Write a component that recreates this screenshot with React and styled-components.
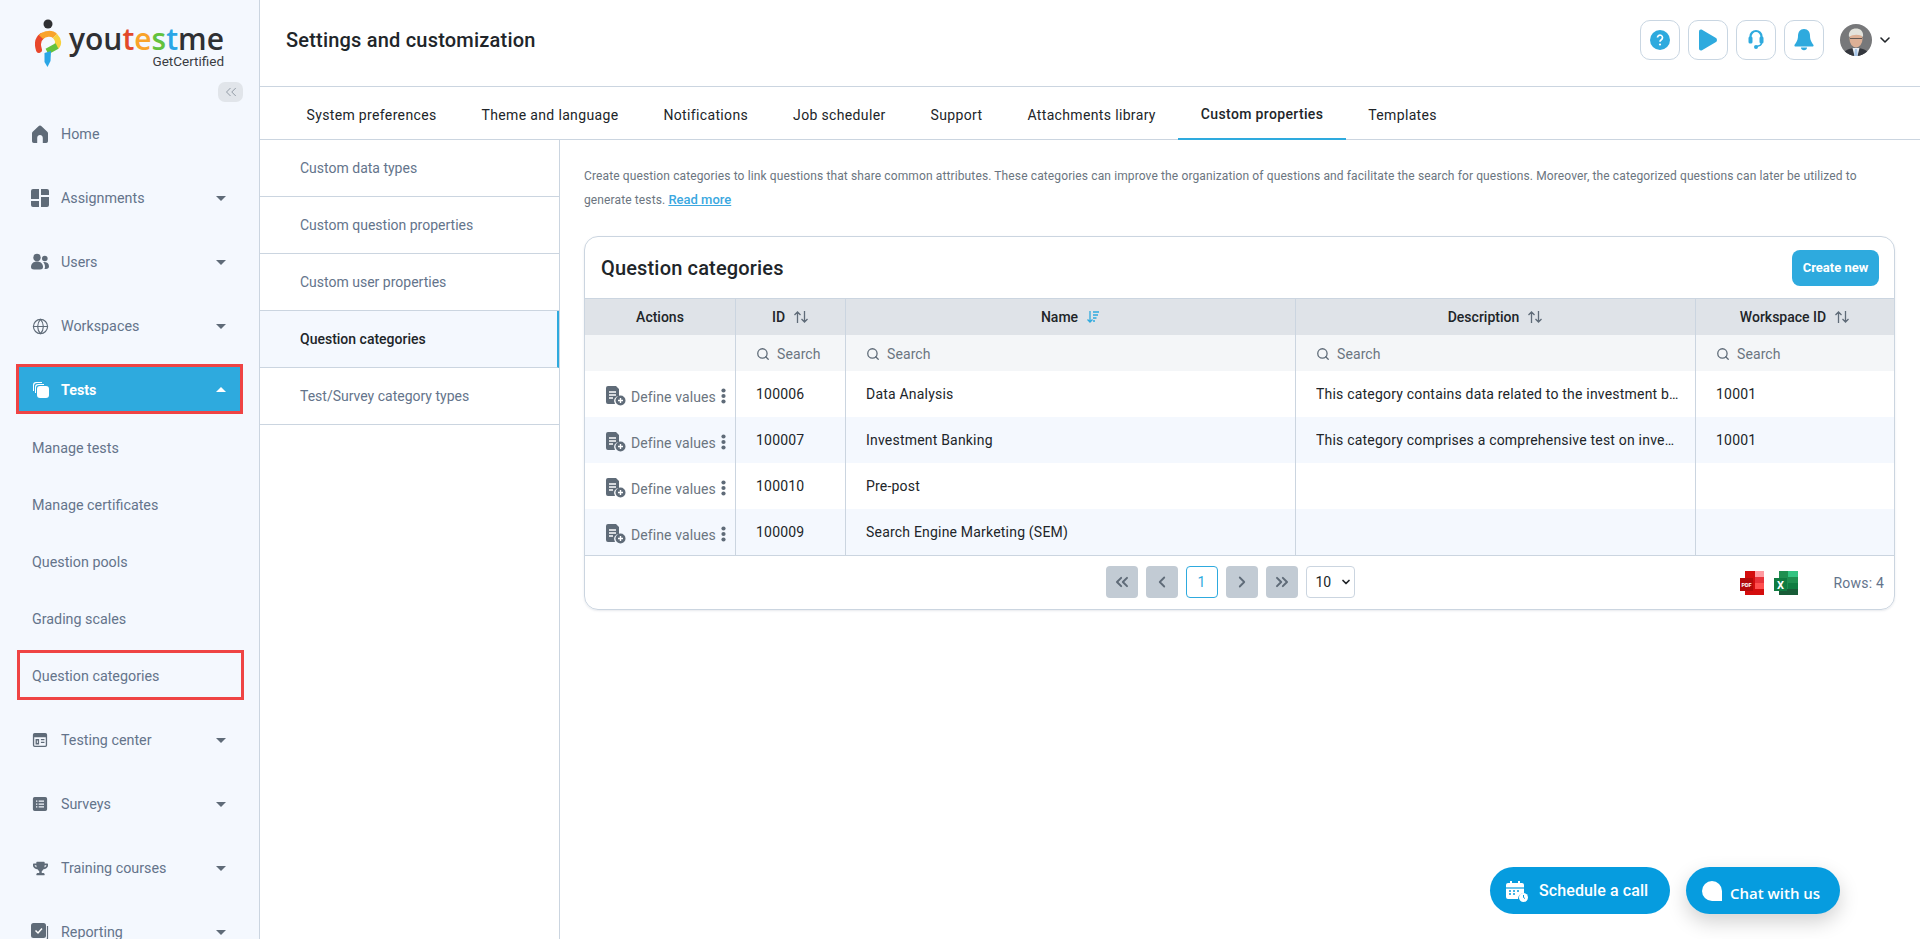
import React from "react";
import styled, { createGlobalStyle } from "styled-components";
import { Globe, ChevronsLeft, ChevronsRight, ChevronLeft, ChevronRight, ChevronDown, Search as SearchIcon } from "lucide-react";
import { FaTrophy } from "react-icons/fa";

const Global = createGlobalStyle`
  html, body { margin: 0; padding: 0; height: 100%; overflow: hidden; background: #fff; }
  body { font-family: Roboto, "Liberation Sans", sans-serif; color: #212529; }
  * { box-sizing: border-box; }
`;

const Page = styled.div`display: flex; width: 1920px; height: 939px; overflow: hidden; position: relative;`;

const Sidebar = styled.aside`
  width: 260px; flex: none; background: #f4f8fe; border-right: 1px solid #cbd5e0;
  display: flex; flex-direction: column; overflow: hidden; height: 939px;
`;
const LogoArea = styled.div`height: 80px; padding: 19px 0 0 35px; display: flex; gap: 6px; flex: none;`;
const LogoText = styled.div`display: flex; flex-direction: column; align-items: flex-end; line-height: 1; margin-top: 3px;`;
const Brand = styled.div`font-family: "Open Sans", sans-serif; font-weight: 600; font-size: 30px; line-height: 34px; color: #2f3033;`;
const BrandPart = styled.span`color: ${p => p.$c};`;
const Tagline = styled.div`font-size: 13.5px; color: #3a3d42; margin-top: -1px;`;
const CollapseRow = styled.div`display: flex; justify-content: flex-end; padding-right: 16px; flex: none; height: 20px; margin-top: 2px;`;
const Collapse = styled.div`width: 25px; height: 20px; background: #e1e5ea; border-radius: 7px; display: flex; align-items: center; justify-content: center; color: #77818d;`;

const NavItem = styled.div`
  height: 64px; flex: none; display: flex; align-items: center;
  color: #64748b; font-size: 14.3px; padding: 0 33px 0 31px;
`;
const SubItem = styled.div`
  height: 57px; flex: none; display: flex; align-items: center;
  color: #64748b; font-size: 14.3px; padding-left: 32px;
`;
const ActiveNav = styled.div`
  height: 50px; flex: none; display: flex; align-items: center; margin: 6px 16px 5px; padding: 1px 14px 0 13px;
  background: #2eaade; border: 3px solid #ef4444;
  color: #fff; font-weight: 700; font-size: 14.3px;
`;
const BoxedNav = styled.div`
  height: 50px; margin: 3px 15px 8px 17px; flex: none; display: flex; align-items: center; padding: 1px 12px 0;
  border: 3px solid #ef4444; color: #64748b; font-size: 14.3px;
`;
const NavIcon = styled.span`width: 18px; height: 18px; display: inline-flex; align-items: center; justify-content: center; margin-right: 12px; color: #5f6b78; flex: none;`;
const ActiveIcon = styled(NavIcon)`color: #fff; margin-right: 11px;`;
const NavLabel = styled.span`flex: 1;`;
const Caret = styled.span`
  width: 0; height: 0; border-left: 5px solid transparent; border-right: 5px solid transparent;
  ${p => p.$up ? "border-bottom: 5px solid #fff;" : "border-top: 5px solid #5f6b78;"}
`;

const Main = styled.div`flex: 1; min-width: 0; display: flex; flex-direction: column;`;
const Header = styled.header`height: 87px; flex: none; display: flex; align-items: center; padding: 0 27px 7px 26px; border-bottom: 1px solid #cbd5e0;`;
const Title = styled.h1`margin: 0; font-size: 20px; font-weight: 500; color: #212529; flex: 1; letter-spacing: .2px;`;
const HeaderBtn = styled.div`width: 40px; height: 40px; border: 1px solid #c9d6e2; border-radius: 10px; margin-left: 8px; display: flex; align-items: center; justify-content: center;`;
const UserWrap = styled.div`display: flex; align-items: center; margin-left: 16px; gap: 5px;`;
const Avatar = styled.svg`width: 32px; height: 32px; border-radius: 50%; display: block;`;

const Tabs = styled.nav`height: 53px; flex: none; display: flex; padding-left: 24px; border-bottom: 1px solid #cbd5e0;`;
const Tab = styled.div`
  padding: 3px 22.5px 0; display: flex; align-items: center; font-size: 14px; color: #212529;
  font-weight: ${p => p.$active ? 500 : 400}; height: 53px; letter-spacing: .35px;
  border-bottom: ${p => p.$active ? "2px solid #2eaade" : "none"};
`;
const Body = styled.div`flex: 1; display: flex; min-height: 0;`;
const SideMenu = styled.div`width: 300px; flex: none; border-right: 1px solid #cbd5e0;`;
const SideRow = styled.div`
  height: 57px; padding-left: 40px; display: flex; align-items: center; font-size: 14px;
  border-bottom: 1px solid #cbd5e0; color: ${p => p.$active ? "#212529" : "#64748b"};
  font-weight: ${p => p.$active ? 500 : 400}; background: ${p => p.$active ? "#f4f8fe" : "#fff"};
  border-right: ${p => p.$active ? "2px solid #2eaade" : "none"};
`;
const Content = styled.div`flex: 1; padding: 24px 25px 0 24px; min-width: 0;`;
const Desc = styled.p`margin: 0 0 24px; font-size: 12px; line-height: 24px; color: #6b7580; letter-spacing: .12px;`;
const ReadMore = styled.a`color: #3ba8e0; font-weight: 500; font-size: 13px; letter-spacing: 0; text-decoration: underline;`;
const Card = styled.section`border: 1px solid #cbd5e0; border-radius: 14px; overflow: hidden; box-shadow: 0 1px 2px rgba(100,116,139,.15);`;
const CardHead = styled.div`height: 62px; display: flex; align-items: center; justify-content: space-between; padding: 0 15px 0 16px; border-bottom: 1px solid #cbd5e0;`;
const CardTitle = styled.h2`margin: 0; font-size: 20px; font-weight: 500; color: #212529; letter-spacing: .16px;`;
const CreateBtn = styled.button`width: 87px; height: 36px; border: 0; border-radius: 8px; background: #2eaade; color: #fff; font: 700 13px Roboto, sans-serif;`;

const Grid = styled.div`display: grid; grid-template-columns: 151px 110px 450px 400px 1fr;`;
const Th = styled.div`height: 36px; background: #dfe3e8; display: flex; align-items: center; justify-content: center; gap: 8px; font-size: 14px; font-weight: 500; color: #212529; border-right: ${p => p.$last ? 0 : "1px solid #cbd5e0"};`;
const SearchCell = styled.div`height: 36px; background: #f4f6f8; display: flex; align-items: center; padding: 2px 0 0 20px; gap: 7px; color: #6b7580; font-size: 14px; letter-spacing: .1px; border-right: ${p => p.$last ? 0 : "1px solid #cbd5e0"};`;
const Td = styled.div`
  height: 46px; background: ${p => p.$alt ? "#f4f8fe" : "#fff"}; display: flex; align-items: center; padding: 0 16px 0 20px; font-size: 14px; letter-spacing: .2px;
  color: #212529; border-right: ${p => p.$last ? 0 : "1px solid #cbd5e0"}; min-width: 0;
`;
const Ellipsis = styled.span`overflow: hidden; text-overflow: ellipsis; white-space: nowrap;`;
const ActionCell = styled(Td)`padding: 3px 0 0 21px; gap: 5px; color: #6b7580; letter-spacing: .1px;`;
const ActionLabel = styled.span`font-size: 14px; margin-top: 2px;`;
const Footer = styled.div`height: 54px; border-top: 1px solid #cbd5e0; display: flex; align-items: center; position: relative; justify-content: center; padding: 0 19px 1px 0; gap: 8px;`;
const PageBtn = styled.div`width: 32px; height: 32px; border-radius: 4px; background: #c2cbd4; color: #5f6b78; display: flex; align-items: center; justify-content: center;`;
const PageNum = styled.div`width: 32px; height: 32px; border-radius: 4px; border: 1px solid #2eaade; color: #2eaade; font-size: 14px; display: flex; align-items: center; justify-content: center;`;
const PageSize = styled.div`width: 49px; height: 32px; border-radius: 4px; border: 1px solid #cbd5e0; font-size: 14px; color: #212529; display: flex; align-items: center; padding-left: 9px; gap: 9px;`;
const FooterRight = styled.div`position: absolute; right: 10px; top: 0; bottom: 0; display: flex; align-items: center; gap: 10px;`;
const Rows = styled.span`font-size: 14px; color: #64748b; margin-left: 26px; letter-spacing: .2px;`;

const Float = styled.div`position: absolute; bottom: 25px; height: 47px; border-radius: 24px; background: #069cdf; color: #fff; display: flex; align-items: center;`;
const CallBtn = styled(Float)`left: 1490px; width: 180px; padding-left: 16px; gap: 11px; font-weight: 500; font-size: 16px; letter-spacing: .1px;`;
const ChatBtn = styled(Float)`left: 1686px; width: 154px; padding: 0 0 0 16px; gap: 8px; box-shadow: 0 8px 20px rgba(0,0,0,.18); font-family: "Open Sans", sans-serif; font-weight: 600; font-size: 15px;`;
const ChatDot = styled.span`width: 20px; height: 20px; border-radius: 50% 50% 0 50%; background: #fff; display: block;`;
const ChatLabel = styled.span`padding-top: 4px;`;

const Mono = ({ children, size = 18 }) => <svg width={size} height={size} viewBox="0 0 18 18" fill="currentColor">{children}</svg>;

const Logo = () => (
  <svg width="28" height="50" viewBox="0 0 28 50">
    <circle cx="13" cy="5" r="4.500" fill="#2f3033" />
    <path d="M4 31 C2 25 3 20 7 17" fill="none" stroke="#e8472b" strokeWidth="6" strokeLinecap="round" />
    <path d="M6 18 C10 14 17 14 20 17" fill="none" stroke="#f9a32a" strokeWidth="6" />
    <path d="M20 17 C24 21 24 25 21 28" fill="none" stroke="#f7d13d" strokeWidth="6" />
    <path d="M22 27 L12 32.500" fill="none" stroke="#63c23e" strokeWidth="6" />
    <path d="M9.500 34 L16 32 L15.500 42 L12.500 48 L9.500 43 Z" fill="#2aa6e6" />
  </svg>
);
const TestsIcon = () => (
  <svg width="18" height="18" viewBox="0 0 18 18" fill="#fff">
    <rect x="5" y="5" width="12" height="12" rx="3" />
    <path d="M1 10 V4 a3 3 0 0 1 3-3 h6 v1 H5 a3 3 0 0 0-3 3 v5 Z" />
    <path d="M3 12 V6 a3 3 0 0 1 3-3 h6 v1 H7 a3 3 0 0 0-3 3 v5 Z" />
  </svg>
);
const DefineIcon = () => (
  <svg width="20" height="20" viewBox="0 0 20 20">
    <path d="M2 0 h8 l3 3 v7 a5 5 0 0 0-4 8 H2 a2 2 0 0 1-2-2 V2 a2 2 0 0 1 2-2 Z" fill="#5f6b78" />
    <path d="M3 6h7M3 9h7M3 12h4" stroke="#fff" strokeWidth="1.300" />
    <circle cx="14.500" cy="14.500" r="5" fill="#5f6b78" />
    <path d="M12 14.500h5M14.500 12v5" stroke="#fff" strokeWidth="1.400" />
  </svg>
);
const Kebab = () => (
  <svg width="5" height="16" viewBox="0 0 5 16" fill="#5f6b78"><circle cx="2.500" cy="2.500" r="2.100" /><circle cx="2.500" cy="8" r="2.100" /><circle cx="2.500" cy="13.500" r="2.100" /></svg>
);
const Sort = ({ active }) => active ? (
  <svg width="14" height="14" viewBox="0 0 14 14" fill="none" stroke="#2eaade" strokeWidth="1.300"><path d="M4 1v11M1.500 9.500 4 12l2.500-2.500M7 2h6M7 5h5M7 8h3.500M7 11h2" /></svg>
) : (
  <svg width="16" height="14" viewBox="0 0 16 14" fill="none" stroke="#5f6b78" strokeWidth="1.300"><path d="M4.500 13V2M1.500 5l3-3 3 3M11.500 1v11M8.500 9l3 3 3-3" /></svg>
);
const Find = () => <SearchIcon size={14} strokeWidth={2.200} color="#5f6b78" />;

const navTop = [
  ["Home", <Mono><path fillRule="evenodd" d="M9 .5c.6 0 1.100.3 1.500.7l5.800 5.600c.5.5.7 1.100.7 1.700v7.500c0 1.100-.8 2-1.800 2h-3.400V13c0-1.700-1.300-3-2.800-3S6.200 11.300 6.200 13v5H2.800C1.800 18 1 17.100 1 16V8.500c0-.6.200-1.200.7-1.700l5.800-5.600C7.900.8 8.400.5 9 .5Z" /></Mono>, false],
  ["Assignments", <Mono><path d="M2 0h6v10H0V2a2 2 0 0 1 2-2Zm8 0h6a2 2 0 0 1 2 2v4h-8ZM0 12h8v6H2a2 2 0 0 1-2-2Zm10-4h8v8a2 2 0 0 1-2 2h-6Z" /></Mono>, true],
  ["Users", <Mono><circle cx="6" cy="4.500" r="3.700" /><circle cx="13.800" cy="5.500" r="2.800" /><path d="M0 14c0-3.300 2.500-5.500 6-5.500s6 2.200 6 5.500c0 1.700-1.200 2.500-3 2.500H3c-1.800 0-3-.8-3-2.500Z" /><path d="M13 9c3 0 5 1.500 5 4.300 0 1.700-1.200 2.700-3 2.700h-1.600c.4-.6.600-1.300.6-2 0-1.800-.6-3.500-1.900-4.900Z" /></Mono>, true],
  ["Workspaces", <Globe size={17} strokeWidth={1.600} />, true],
];
const navBottom = [
  ["Testing center", <Mono size={16}><path fillRule="evenodd" d="M3 1h12a2 2 0 0 1 2 2v12a2 2 0 0 1-2 2H3a2 2 0 0 1-2-2V3a2 2 0 0 1 2-2Zm-.5 5v9a.5.5 0 0 0 .5.5h12a.5.5 0 0 0 .5-.5V6ZM4 8h4v6H4Zm1.500 1.500v3h1v-3ZM10 8h4v1.400h-4Zm0 3h4v1.400h-4Z" /></Mono>],
  ["Surveys", <Mono size={16}><path fillRule="evenodd" d="M3 1h12a2 2 0 0 1 2 2v12a2 2 0 0 1-2 2H3a2 2 0 0 1-2-2V3a2 2 0 0 1 2-2Zm1.500 4v1.500H6V5Zm3 0v1.500h6V5Zm-3 3.300v1.500H6V8.300Zm3 0v1.500h6V8.300Zm-3 3.200V13H6v-1.500Zm3 0V13h6v-1.500Z" /></Mono>],
  ["Training courses", <FaTrophy size={15} />],
  ["Reporting", <Mono><rect x="0" y="0" width="15" height="15" rx="2.500" /><path d="M16.500 3v12a2 2 0 0 1-2 2H3" fill="none" stroke="currentColor" strokeWidth="1.200" /><path d="M4.500 7.500 7 10l4-4.500" fill="none" stroke="#fff" strokeWidth="1.500" /></Mono>],
];
const subs = ["Manage tests", "Manage certificates", "Question pools", "Grading scales"];
const tabs = ["System preferences", "Theme and language", "Notifications", "Job scheduler", "Support", "Attachments library", "Custom properties", "Templates"];
const side = ["Custom data types", "Custom question properties", "Custom user properties", "Question categories", "Test/Survey category types"];
const rows = [
  ["100006", "Data Analysis", "This category contains data related to the investment banking sector and its analysis.", "10001"],
  ["100007", "Investment Banking", "This category comprises a comprehensive test on investment banking fundamentals.", "10001"],
  ["100010", "Pre-post", "", ""],
  ["100009", "Search Engine Marketing (SEM)", "", ""],
];
const heads = [["ID"], ["Name", true], ["Description"], ["Workspace ID"]];

export default function App() {
  return (
    <Page>
      <Global />
      <Sidebar>
        <LogoArea>
          <Logo />
          <LogoText>
            <Brand>you<BrandPart $c="#e2492b">t</BrandPart><BrandPart $c="#f9a32a">e</BrandPart><BrandPart $c="#63c23e">s</BrandPart><BrandPart $c="#2aa6e6">t</BrandPart>me</Brand>
            <Tagline>GetCertified</Tagline>
          </LogoText>
        </LogoArea>
        <CollapseRow><Collapse><ChevronsLeft size={18} strokeWidth={1} /></Collapse></CollapseRow>
        {navTop.map(([t, ic, c]) => (
          <NavItem key={t}><NavIcon>{ic}</NavIcon><NavLabel>{t}</NavLabel>{c && <Caret />}</NavItem>
        ))}
        <ActiveNav><ActiveIcon><TestsIcon /></ActiveIcon><NavLabel>Tests</NavLabel><Caret $up /></ActiveNav>
        {subs.map(t => <SubItem key={t}>{t}</SubItem>)}
        <BoxedNav>Question categories</BoxedNav>
        {navBottom.map(([t, ic]) => (
          <NavItem key={t}><NavIcon>{ic}</NavIcon><NavLabel>{t}</NavLabel><Caret /></NavItem>
        ))}
      </Sidebar>
      <Main>
        <Header>
          <Title>Settings and customization</Title>
          <HeaderBtn>
            <svg width="20" height="20" viewBox="0 0 20 20"><circle cx="10" cy="10" r="10" fill="#2eaade" /><path d="M7.500 7.600a2.500 2.500 0 1 1 3.800 2.100c-.9.600-1.300 1-1.300 2" fill="none" stroke="#fff" strokeWidth="1.700" /><circle cx="10" cy="14.500" r="1.100" fill="#fff" /></svg>
          </HeaderBtn>
          <HeaderBtn>
            <svg width="20" height="22" viewBox="0 0 20 22" fill="#2eaade"><path d="M1 2.500C1 .8 2.600 0 4 .8l14 8.200c1.300.8 1.300 3.200 0 4L4 21.200C2.600 22 1 21.200 1 19.500Z" /></svg>
          </HeaderBtn>
          <HeaderBtn>
            <svg width="16" height="21" viewBox="0 0 16 21" fill="none" stroke="#2eaade"><path d="M2.500 9V7.500a5.500 5.500 0 0 1 11 0V9" strokeWidth="2.200" /><rect x="0.500" y="7.500" width="4" height="7" rx="1.500" fill="#2eaade" strokeWidth="0" /><rect x="11.500" y="7.500" width="4" height="7" rx="1.500" fill="#2eaade" strokeWidth="0" /><path d="M13.500 14c0 2-2 3-5 3.500" strokeWidth="1.500" /><circle cx="8" cy="18" r="2" fill="#2eaade" strokeWidth="0" /></svg>
          </HeaderBtn>
          <HeaderBtn>
            <svg width="20" height="22" viewBox="0 0 20 22" fill="#2eaade"><path d="M10 0C6 0 4 3 4 7c0 5-3 8-3.500 9-.3.800.2 1.500 1 1.500h17c.8 0 1.300-.7 1-1.500C19 15 16 12 16 7c0-4-2-7-6-7Z" /><path d="M7 18.500h6c0 1.800-1.300 2.800-3 2.800s-3-1-3-2.800Z" /></svg>
          </HeaderBtn>
          <UserWrap>
            <Avatar viewBox="0 0 32 32">
              <rect width="32" height="32" fill="#77787a" />
              <path d="M3 32c1-6 6-8 13-8s12 2 13 8Z" fill="#34373e" />
              <path d="M12.500 24h7l-2 8h-3Z" fill="#e8edf3" />
              <path d="M15 25h2l.8 7h-3.600Z" fill="#a9c8ea" />
              <ellipse cx="16" cy="15" rx="6.500" ry="8.500" fill="#dcb096" />
              <path d="M9 13c-1-6 3-8.500 7-8.500s8 2.500 7 8.500c-3-3-10-3-14 0Z" fill="#e3e3dc" />
              <path d="M10 14.500h12" stroke="#444" strokeWidth=".8" />
            </Avatar>
            <ChevronDown size={16} strokeWidth={2.400} color="#212529" />
          </UserWrap>
        </Header>
        <Tabs>{tabs.map(t => <Tab key={t} $active={t === "Custom properties"}>{t}</Tab>)}</Tabs>
        <Body>
          <SideMenu>{side.map(t => <SideRow key={t} $active={t === "Question categories"}>{t}</SideRow>)}</SideMenu>
          <Content>
            <Desc>Create question categories to link questions that share common attributes. These categories can improve the organization of questions and facilitate the search for questions. Moreover, the categorized questions can later be utilized to generate tests. <ReadMore>Read more</ReadMore></Desc>
            <Card>
              <CardHead><CardTitle>Question categories</CardTitle><CreateBtn>Create new</CreateBtn></CardHead>
              <Grid>
                <Th>Actions</Th>
                {heads.map(([h, a], i) => <Th key={h} $last={i === 3}>{h}<Sort active={a} /></Th>)}
                <SearchCell />
                {heads.map(([h], i) => <SearchCell key={h} $last={i === 3}><Find />Search</SearchCell>)}
                {rows.map((r, i) => (
                  <React.Fragment key={r[0]}>
                    <ActionCell $alt={i % 2 === 1}><DefineIcon /><ActionLabel>Define values</ActionLabel><Kebab /></ActionCell>
                    <Td $alt={i % 2 === 1}><Ellipsis>{r[0]}</Ellipsis></Td>
                    <Td $alt={i % 2 === 1}><Ellipsis>{r[1]}</Ellipsis></Td>
                    <Td $alt={i % 2 === 1}><Ellipsis>{r[2]}</Ellipsis></Td>
                    <Td $alt={i % 2 === 1} $last><Ellipsis>{r[3]}</Ellipsis></Td>
                  </React.Fragment>
                ))}
              </Grid>
              <Footer>
                <PageBtn><ChevronsLeft size={20} strokeWidth={2.400} /></PageBtn>
                <PageBtn><ChevronLeft size={18} strokeWidth={2.400} /></PageBtn>
                <PageNum>1</PageNum>
                <PageBtn><ChevronRight size={18} strokeWidth={2.400} /></PageBtn>
                <PageBtn><ChevronsRight size={20} strokeWidth={2.400} /></PageBtn>
                <PageSize>10<ChevronDown size={12} strokeWidth={3.500} color="#212529" /></PageSize>
                <FooterRight>
                  <svg width="24" height="24" viewBox="0 0 24 24"><rect x="5" y="0" width="19" height="24" fill="#d40d0d" /><rect x="15" y="0" width="9" height="6" fill="#ff9aa0" /><rect x="15" y="6" width="9" height="6" fill="#e8323a" /><rect x="15" y="12" width="9" height="6" fill="#ff5050" /><rect x="0" y="7" width="13" height="13" fill="#b30b0b" /><text x="1.500" y="15.500" fontSize="5.500" fontWeight="700" fill="#fff" fontFamily="Roboto">PDF</text></svg>
                  <svg width="24" height="24" viewBox="0 0 24 24"><rect x="5" y="0" width="19" height="24" fill="#1f8f50" /><rect x="14" y="0" width="10" height="6" fill="#33c481" /><rect x="14" y="12" width="10" height="6" fill="#107c41" /><rect x="5" y="18" width="19" height="6" fill="#185c37" /><rect x="0" y="7" width="13" height="13" fill="#107c41" /><text x="3" y="17.500" fontSize="11" fontWeight="700" fill="#fff" fontFamily="Roboto">X</text></svg>
                  <Rows>Rows: 4</Rows>
                </FooterRight>
              </Footer>
            </Card>
          </Content>
        </Body>
      </Main>
      <CallBtn>
        <svg width="22" height="22" viewBox="0 0 22 22" fill="#fff"><path d="M2 3h2V1h2v2h6V1h2v2h2a2 2 0 0 1 2 2v8a6 6 0 0 0-6 6H2a2 2 0 0 1-2-2V5a2 2 0 0 1 2-2Z" /><path d="M0 8h18" stroke="#069cdf" strokeWidth="1.200" /><path d="M3 11h2M7 11h2M11 11h2M3 14h2M7 14h2" stroke="#069cdf" strokeWidth="1.500" /><circle cx="17.500" cy="17.500" r="4.500" /><path d="M17.500 15v2.500l1.500 1" fill="none" stroke="#069cdf" strokeWidth="1" /></svg>
        Schedule a call
      </CallBtn>
      <ChatBtn><ChatDot /><ChatLabel>Chat with us</ChatLabel></ChatBtn>
    </Page>
  );
}
